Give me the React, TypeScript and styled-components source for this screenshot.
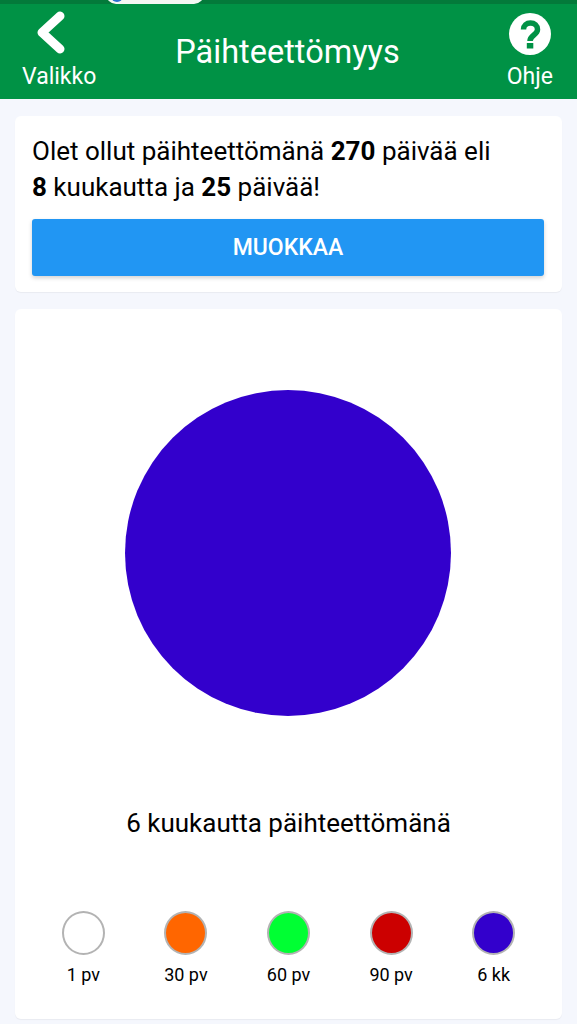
import React from 'react';
import styled, { createGlobalStyle } from 'styled-components';

const milestones = [
  { label: '1 pv', color: '#ffffff' },
  { label: '30 pv', color: '#ff6600' },
  { label: '60 pv', color: '#00ff33' },
  { label: '90 pv', color: '#cc0000' },
  { label: '6 kk', color: '#3300cc' },
];

export default function App() {
  return (
    <>
      <GlobalStyle />
      <Page>
        <StatusStrip>
          <StatusPill>
            <StatusDot />
          </StatusPill>
        </StatusStrip>
        <Header>
          <NavButton>
            <BackIcon viewBox="0 0 30 44">
              <polyline points="24,5 6,21.5 24,38" />
            </BackIcon>
            <NavLabel>Valikko</NavLabel>
          </NavButton>
          <Title>Päihteettömyys</Title>
          <HelpButton>
            <HelpIcon viewBox="0 0 42 42">
              <circle cx="21" cy="21" r="21" fill="#fff" />
              <path
                d="M14.5 16.5C14.5 12.5 17.5 10 21.5 10C25.5 10 28.5 12.5 28.5 16.5C28.5 22 21 22 21 28"
                fill="none"
                stroke="#009245"
                strokeWidth="5.5"
              />
              <rect x="17.8" y="30" width="6.5" height="5.5" fill="#009245" />
            </HelpIcon>
            <NavLabel>Ohje</NavLabel>
          </HelpButton>
        </Header>
        <Content>
          <SummaryCard>
            <Summary>
              Olet ollut päihteettömänä <b>270</b> päivää eli
              <br />
              <b>8</b> kuukautta ja <b>25</b> päivää!
            </Summary>
            <EditButton>MUOKKAA</EditButton>
          </SummaryCard>
          <BadgeCard>
            <BigCircle />
            <Caption>6 kuukautta päihteettömänä</Caption>
            <Legend>
              {milestones.map((m) => (
                <LegendItem key={m.label}>
                  <Swatch $color={m.color} />
                  <SwatchLabel>{m.label}</SwatchLabel>
                </LegendItem>
              ))}
            </Legend>
          </BadgeCard>
        </Content>
      </Page>
    </>
  );
}

const GlobalStyle = createGlobalStyle`
  html, body {
    margin: 0;
    padding: 0;
    background: #f5f7fd;
  }
  * {
    box-sizing: border-box;
  }
`;

const Page = styled.div`
  width: 577px;
  height: 1024px;
  overflow: hidden;
  font-family: Roboto, 'Liberation Sans', sans-serif;
  color: #000;
  background: #f5f7fd;
`;

const StatusStrip = styled.div`
  position: relative;
  height: 4px;
  background: #037a3a;
`;

const StatusPill = styled.div`
  position: absolute;
  left: 106px;
  top: -8px;
  width: 98px;
  height: 12px;
  overflow: hidden;
  border-radius: 0 0 10px 10px;
  background: #f4f8f4;
`;

const StatusDot = styled.div`
  position: absolute;
  left: 5px;
  top: -2px;
  width: 12px;
  height: 12px;
  border-radius: 50%;
  background: #2a6fd0;
`;

const Header = styled.header`
  display: grid;
  grid-template-columns: 1fr auto 1fr;
  height: 95px;
  padding: 0 24px 0 22px;
  background: #009245;
  color: #fff;
`;

const NavButton = styled.div`
  display: flex;
  flex-direction: column;
  align-items: center;
  justify-content: flex-end;
  justify-self: start;
  padding-bottom: 9px;
`;

const HelpButton = styled(NavButton)`
  justify-self: end;
`;

const BackIcon = styled.svg`
  width: 30px;
  height: 44px;
  margin: 0 16px 9px 0;
  fill: none;
  stroke: #fff;
  stroke-width: 9;
  stroke-linecap: round;
  stroke-linejoin: round;
`;

const HelpIcon = styled.svg`
  width: 42px;
  height: 42px;
  margin-bottom: 9px;
`;

const NavLabel = styled.span`
  font-size: 23px;
  line-height: 26px;
`;

const Title = styled.h1`
  margin: 27px 0 0;
  font-size: 32.5px;
  line-height: 42px;
  font-weight: 400;
`;

const Content = styled.main`
  display: flex;
  flex-direction: column;
  gap: 17px;
  padding: 17px 15px 0;
`;

const Card = styled.section`
  border-radius: 6px;
  background: #fff;
  box-shadow: 0 1px 1px rgba(0, 0, 0, 0.05);
`;

const SummaryCard = styled(Card)`
  height: 176px;
  padding: 17px 17px 0;
`;

const Summary = styled.p`
  margin: 0 0 14px;
  font-size: 26px;
  line-height: 36px;
`;

const EditButton = styled.button`
  display: block;
  width: 512px;
  height: 57px;
  border: 0;
  border-radius: 3px;
  background: #2196f3;
  color: #fff;
  font-family: inherit;
  font-size: 23px;
  font-weight: 500;
  box-shadow: 0 2px 4px rgba(0, 0, 0, 0.18);
`;

const BadgeCard = styled(Card)`
  display: flex;
  flex-direction: column;
  align-items: center;
  height: 710px;
  padding: 81px 17px 0;
`;

const BigCircle = styled.div`
  width: 326px;
  height: 326px;
  margin-right: 2px;
  border-radius: 50%;
  background: #3300cc;
`;

const Caption = styled.p`
  margin: 91px 0 0;
  font-size: 26px;
  line-height: 32px;
`;

const Legend = styled.div`
  display: grid;
  grid-template-columns: repeat(5, 1fr);
  width: 100%;
  margin-top: 72px;
`;

const LegendItem = styled.div`
  display: flex;
  flex-direction: column;
  align-items: center;
  gap: 9px;
`;

const Swatch = styled.div<{ $color: string }>`
  width: 43px;
  height: 44px;
  border: 2px solid #b3b3b3;
  border-radius: 50%;
  background: ${({ $color }) => $color};
`;

const SwatchLabel = styled.span`
  font-size: 18px;
  line-height: 22px;
`;
